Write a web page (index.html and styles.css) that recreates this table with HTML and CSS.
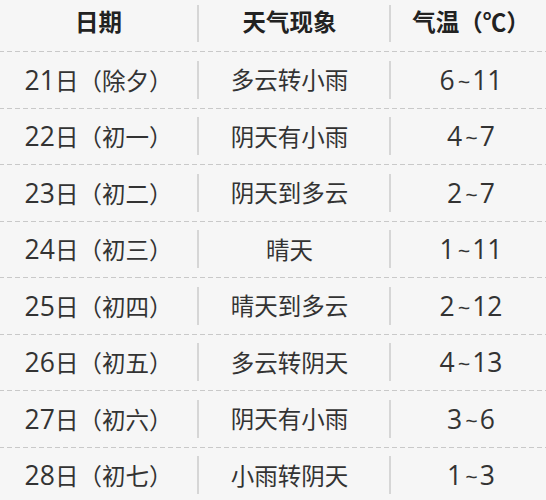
FILE: index.html
```html
<!DOCTYPE html>
<html lang="zh-CN">
<head>
<meta charset="utf-8">
<title>天气</title>
<link rel="stylesheet" href="styles.css">
</head>
<body>
<div class="table">
  <div class="row head">
    <div class="cell c1">日期</div><div class="sep"></div>
    <div class="cell c2">天气现象</div><div class="sep"></div>
    <div class="cell c3">气温（℃）</div>
  </div>
  <div class="row"><div class="cell c1"><span class="n">21</span>日（除夕）</div><div class="sep"></div><div class="cell c2">多云转小雨</div><div class="sep"></div><div class="cell c3"><span class="n">6<span class="t">~</span>11</span></div></div>
  <div class="row"><div class="cell c1"><span class="n">22</span>日（初一）</div><div class="sep"></div><div class="cell c2">阴天有小雨</div><div class="sep"></div><div class="cell c3"><span class="n">4<span class="t">~</span>7</span></div></div>
  <div class="row"><div class="cell c1"><span class="n">23</span>日（初二）</div><div class="sep"></div><div class="cell c2">阴天到多云</div><div class="sep"></div><div class="cell c3"><span class="n">2<span class="t">~</span>7</span></div></div>
  <div class="row"><div class="cell c1"><span class="n">24</span>日（初三）</div><div class="sep"></div><div class="cell c2">晴天</div><div class="sep"></div><div class="cell c3"><span class="n">1<span class="t">~</span>11</span></div></div>
  <div class="row"><div class="cell c1"><span class="n">25</span>日（初四）</div><div class="sep"></div><div class="cell c2">晴天到多云</div><div class="sep"></div><div class="cell c3"><span class="n">2<span class="t">~</span>12</span></div></div>
  <div class="row"><div class="cell c1"><span class="n">26</span>日（初五）</div><div class="sep"></div><div class="cell c2">多云转阴天</div><div class="sep"></div><div class="cell c3"><span class="n">4<span class="t">~</span>13</span></div></div>
  <div class="row"><div class="cell c1"><span class="n">27</span>日（初六）</div><div class="sep"></div><div class="cell c2">阴天有小雨</div><div class="sep"></div><div class="cell c3"><span class="n">3<span class="t">~</span>6</span></div></div>
  <div class="row"><div class="cell c1"><span class="n">28</span>日（初七）</div><div class="sep"></div><div class="cell c2">小雨转阴天</div><div class="sep"></div><div class="cell c3"><span class="n">1<span class="t">~</span>3</span></div></div>
</div>
</body>
</html>
```
FILE: styles.css
```css
html, body {
  margin: 0;
  padding: 0;
  background: #f6f6f6;
}
body {
  width: 546px;
  height: 500px;
  overflow: hidden;
  font-family: "Noto Sans CJK SC", sans-serif;
  font-size: 23.5px;
  color: #333;
}
.table {
  display: flex;
  flex-direction: column;
}
.row {
  display: flex;
  align-items: center;
  height: 56.5px;
  box-sizing: border-box;
  border-top: 1px solid transparent;
  border-image: repeating-linear-gradient(to right, #c9c9c9 0 5px, transparent 5px 8px) 1;
}
.row.head {
  height: 51px;
  border-top: none;
  padding-bottom: 7px;
  font-weight: bold;
  color: #222;
}
.cell {
  text-align: center;
  white-space: nowrap;
  line-height: 1;
  box-sizing: border-box;
}
.n {
  font-family: "Open Sans", sans-serif;
  font-size: 26.5px;
}
.t {
  font-size: 22px;
  margin: 0 2px 0 3px;
}
.c1 { width: 197px; }
.c2 { width: 190px; padding-right: 9px; }
.c3 { flex: 1; padding-left: 5px; }
.sep {
  width: 2px;
  height: 38px;
  background: #d6d6d6;
  flex: none;
}
.head .sep { height: 37px; margin-top: 2px; }
```
